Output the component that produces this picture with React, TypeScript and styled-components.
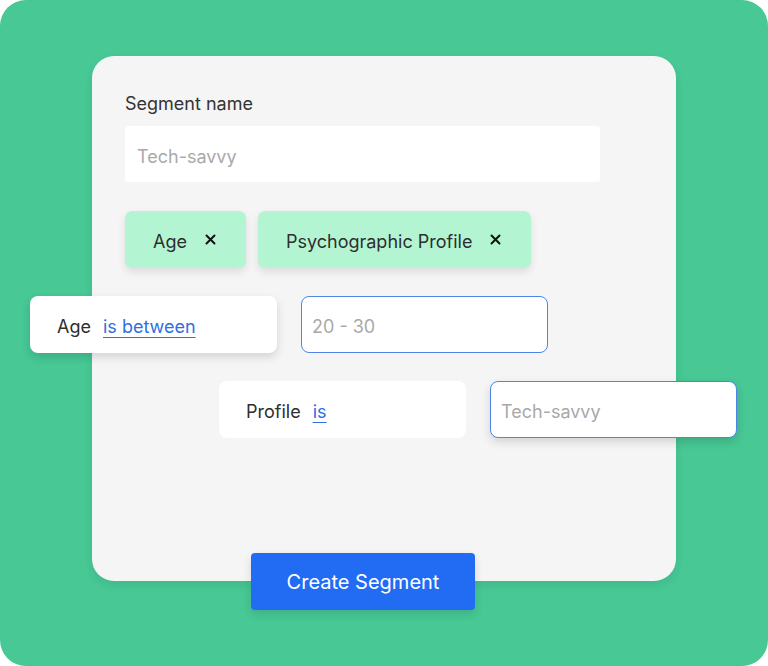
import React from "react";
import styled, { createGlobalStyle } from "styled-components";

const Global = createGlobalStyle`
  html, body { margin: 0; padding: 0; background: #ffffff; }
  body { font-family: Inter, "Open Sans", "Liberation Sans", sans-serif; }
  * { box-sizing: border-box; }
`;

const Stage = styled.div`
  width: 768px;
  height: 666px;
  background: #47c895;
  border-radius: 26px;
  padding: 56px 0 0 92px;
  overflow: hidden;
`;

const Card = styled.div`
  width: 584px;
  height: 525px;
  background: #f5f5f5;
  border-radius: 22px;
  box-shadow: 0 4px 10px rgba(0, 0, 0, 0.08);
  padding: 37px 0 0 33px;
  display: flex;
  flex-direction: column;
`;

const Label = styled.div`
  font-size: 18px;
  line-height: 22px;
  color: #333333;
  margin-bottom: 11px;
`;

const NameInput = styled.div`
  width: 475px;
  height: 56px;
  background: #ffffff;
  border-radius: 3px;
  display: flex;
  align-items: center;
  padding: 4px 0 0 12px;
  font-size: 18px;
  color: #a9a9a9;
  flex-shrink: 0;
`;

const ChipRow = styled.div`
  display: flex;
  gap: 12px;
  margin-top: 29px;
  flex-shrink: 0;
`;

const Chip = styled.div`
  height: 57px;
  background: #b3f5d3;
  border-radius: 7px;
  box-shadow: 0 4px 8px rgba(0, 0, 0, 0.1);
  display: flex;
  align-items: center;
  padding: 3px 30px 0 28px;
  gap: 18px;
  font-size: 18px;
  color: #2e2e2e;
`;

const CloseX = styled.svg`
  width: 11px;
  height: 11px;
  margin-top: -4px;
`;

const CondRow = styled.div<{ $offset: number }>`
  display: flex;
  gap: 24px;
  margin-top: 28px;
  margin-left: ${(p) => p.$offset}px;
  flex-shrink: 0;
`;

const CondBox = styled.div<{ $raised?: boolean }>`
  width: 247px;
  height: 57px;
  flex-shrink: 0;
  background: #ffffff;
  border-radius: 8px;
  box-shadow: ${(p) => (p.$raised ? "0 4px 10px rgba(0,0,0,0.14)" : "none")};
  display: flex;
  align-items: center;
  padding: 3px 0 0 27px;
  gap: 12px;
  font-size: 18px;
  color: #2e2e2e;
`;

const Operator = styled.span`
  color: #2f6fe0;
  text-decoration: underline;
  text-underline-offset: 4px;
  text-decoration-thickness: 1px;
`;

const ValueInput = styled.div<{ $raised?: boolean }>`
  width: 247px;
  height: 57px;
  flex-shrink: 0;
  background: #ffffff;
  border: 1.5px solid #4f86e6;
  border-radius: 8px;
  box-shadow: ${(p) => (p.$raised ? "0 4px 10px rgba(0,0,0,0.14)" : "none")};
  display: flex;
  align-items: center;
  padding: 3px 0 0 10px;
  font-size: 18px;
  color: #a9a9a9;
`;

const Button = styled.button`
  margin: auto 0 -29px 126px;
  width: 224px;
  height: 57px;
  border: none;
  border-radius: 4px;
  background: #226cf4;
  color: #ffffff;
  font-family: inherit;
  font-size: 20px;
  padding-top: 2px;
  box-shadow: 0 4px 10px rgba(0, 0, 0, 0.12);
  flex-shrink: 0;
`;

const X = () => (
  <CloseX viewBox="0 0 11 11">
    <path d="M1.5 1.5 L9.5 9.5 M9.5 1.5 L1.5 9.5" stroke="#111" strokeWidth="2" strokeLinecap="round" />
  </CloseX>
);

export default function App() {
  return (
    <>
      <Global />
      <Stage>
        <Card>
          <Label>Segment name</Label>
          <NameInput>Tech-savvy</NameInput>
          <ChipRow>
            <Chip>
              Age <X />
            </Chip>
            <Chip>
              Psychographic Profile <X />
            </Chip>
          </ChipRow>
          <CondRow $offset={-95}>
            <CondBox $raised>
              Age <Operator>is between</Operator>
            </CondBox>
            <ValueInput>20 - 30</ValueInput>
          </CondRow>
          <CondRow $offset={94}>
            <CondBox>
              Profile <Operator>is</Operator>
            </CondBox>
            <ValueInput $raised>Tech-savvy</ValueInput>
          </CondRow>
          <Button>Create Segment</Button>
        </Card>
      </Stage>
    </>
  );
}
